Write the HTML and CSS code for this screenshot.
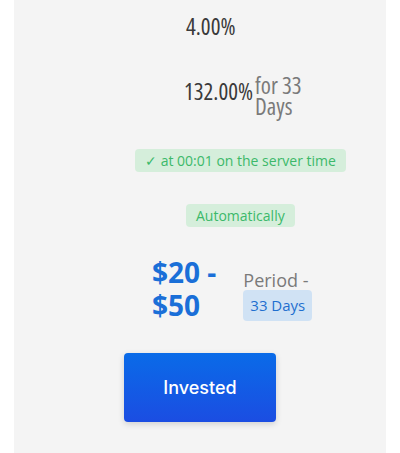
FILE: index.html
```html
<!DOCTYPE html>
<html lang="en">
<head>
    <meta charset="UTF-8">
    <meta name="viewport" content="width=device-width, initial-scale=1.0">
    <title>Plan</title>
    <link rel="stylesheet" href="styles.css">
</head>
<body>
    <div class="panel">
        <div class="rate">4.00%</div>

        <div class="total">
            <span class="total-value">132.00%</span>
            <span class="total-term">for 33<br>Days</span>
        </div>

        <div class="badge badge-green badge-time">&#10003; at 00:01 on the server time</div>

        <div class="badge badge-green badge-auto">Automatically</div>

        <div class="price-row">
            <div class="price">$20 -<br>$50</div>
            <div class="period">
                <div class="period-label">Period -</div>
                <div class="badge badge-blue">33 Days</div>
            </div>
        </div>

        <button class="invest-btn">Invested</button>
    </div>
</body>
</html>
```

FILE: styles.css
```css
body {
    margin: 0;
    background-color: #fff;
    font-family: 'Open Sans', 'Noto Sans', sans-serif;
    color: #333;
}
.panel {
    margin: 0 14px;
    min-height: 453px;
    background-color: #f4f4f4;
    display: flex;
    flex-direction: column;
    align-items: flex-start;
    padding-top: 12px;
    box-sizing: border-box;
}
.rate {
    margin-left: 172px;
    font-size: 23px;
    line-height: 28px;
    font-stretch: condensed;
    color: #3a3a3a;
}
.total {
    display: flex;
    align-items: flex-start;
    margin-left: 170px;
    margin-top: 37px;
}
.total-value {
    font-size: 23px;
    line-height: 28px;
    font-stretch: condensed;
    color: #3a3a3a;
}
.total-term {
    margin-top: -2px;
    padding-left: 2px;
    font-size: 23px;
    line-height: 21px;
    font-stretch: condensed;
    color: #7a7a7a;
}
.badge {
    border-radius: 4px;
}
.badge-green {
    background-color: #d5eedb;
    color: #3cb96a;
    font-size: 14px;
    font-weight: 500;
    line-height: 23px;
    padding: 0 10px;
}
.badge-time {
    margin-left: 121px;
    margin-top: 32px;
}
.badge-auto {
    margin-left: 172px;
    margin-top: 32px;
}
.price-row {
    display: flex;
    align-items: flex-end;
    gap: 27px;
    margin-left: 138px;
    margin-top: 29px;
}
.price {
    font-size: 28px;
    line-height: 33px;
    font-weight: 700;
    color: #1a6fd8;
}
.period {
    margin-bottom: 1px;
}
.period-label {
    font-size: 18px;
    line-height: 20px;
    color: #7a7a7a;
}
.badge-blue {
    display: inline-block;
    background-color: #d0e2f4;
    color: #1f6fcf;
    font-size: 15px;
    line-height: 31px;
    padding: 0 7px;
}
.invest-btn {
    margin-left: 110px;
    margin-top: 31px;
    width: 152px;
    height: 69px;
    border: none;
    border-radius: 4px;
    background: linear-gradient(#0a6be8, #1b4de2);
    box-shadow: 0 2px 6px rgba(0, 0, 0, 0.15);
    color: #fff;
    font-family: Inter, 'Noto Sans', sans-serif;
    font-size: 18px;
    font-weight: 500;
    cursor: pointer;
}
```
